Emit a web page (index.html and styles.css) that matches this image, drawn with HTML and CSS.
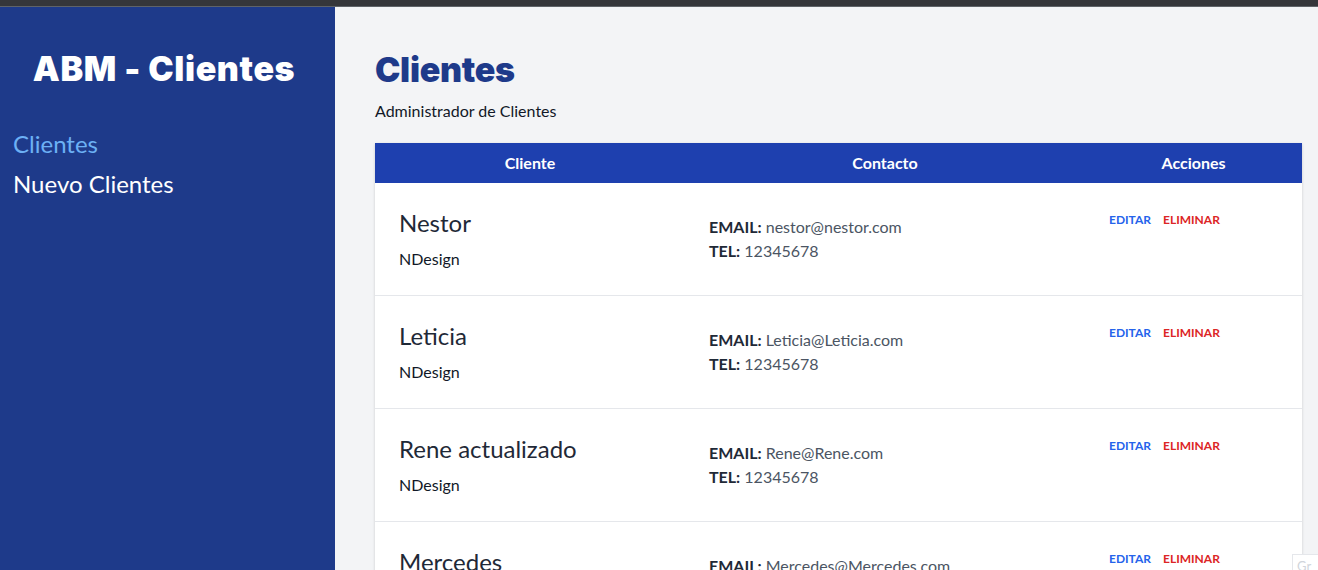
FILE: index.html
```html
<!DOCTYPE html>
<html lang="es">
<head>
<meta charset="utf-8">
<title>ABM - Clientes</title>
<link rel="stylesheet" href="styles.css">
</head>
<body>
<div class="topbar"></div>
<div class="layout">
  <aside class="sidebar">
    <h1 class="brand">ABM - Clientes</h1>
    <nav class="nav">
      <a class="nav-link active" href="#">Clientes</a>
      <a class="nav-link" href="#">Nuevo Clientes</a>
    </nav>
  </aside>
  <main class="main">
    <h2 class="page-title">Clientes</h2>
    <p class="page-sub">Administrador de Clientes</p>
    <table class="table">
      <colgroup>
        <col class="c1"><col class="c2"><col class="c3">
      </colgroup>
      <thead>
        <tr><th>Cliente</th><th>Contacto</th><th>Acciones</th></tr>
      </thead>
      <tbody>
        <tr>
          <td class="cell-client"><p class="name">Nestor</p><p class="company">NDesign</p></td>
          <td class="cell-contact"><p><span class="label">EMAIL:</span> nestor@nestor.com</p><p><span class="label">TEL:</span> 12345678</p></td>
          <td class="cell-actions"><a class="act edit" href="#">Editar</a><a class="act del" href="#">Eliminar</a></td>
        </tr>
        <tr>
          <td class="cell-client"><p class="name">Leticia</p><p class="company">NDesign</p></td>
          <td class="cell-contact"><p><span class="label">EMAIL:</span> Leticia@Leticia.com</p><p><span class="label">TEL:</span> 12345678</p></td>
          <td class="cell-actions"><a class="act edit" href="#">Editar</a><a class="act del" href="#">Eliminar</a></td>
        </tr>
        <tr>
          <td class="cell-client"><p class="name">Rene actualizado</p><p class="company">NDesign</p></td>
          <td class="cell-contact"><p><span class="label">EMAIL:</span> Rene@Rene.com</p><p><span class="label">TEL:</span> 12345678</p></td>
          <td class="cell-actions"><a class="act edit" href="#">Editar</a><a class="act del" href="#">Eliminar</a></td>
        </tr>
        <tr>
          <td class="cell-client"><p class="name">Mercedes</p><p class="company">NDesign</p></td>
          <td class="cell-contact"><p><span class="label">EMAIL:</span> Mercedes@Mercedes.com</p><p><span class="label">TEL:</span> 12345678</p></td>
          <td class="cell-actions"><a class="act edit" href="#">Editar</a><a class="act del" href="#">Eliminar</a></td>
        </tr>
      </tbody>
    </table>
  </main>
</div>
<div class="corner-widget">Gr</div>
</body>
</html>
```
FILE: styles.css
```css
* { box-sizing: border-box; }
html, body { margin: 0; padding: 0; }
body {
  font-family: "Lato", "Noto Sans", "DejaVu Sans", sans-serif;
  color: #111827;
  background: #f3f4f6;
  height: 570px;
  overflow: hidden;
}
.topbar {
  height: 7px;
  background: #35363a;
  border-bottom: 1px solid #5f6368;
}
.layout {
  display: flex;
  height: 563px;
}
.sidebar {
  width: 335px;
  flex-shrink: 0;
  background: #1e3a8a;
  padding: 42px 20px 0 13px;
}
.brand {
  margin: 0;
  text-align: center;
  color: #ffffff;
  font-family: "Inter", "Lato", sans-serif;
  font-size: 34px;
  line-height: 40px;
  font-weight: 900;
  letter-spacing: 0.6px;
}
.nav {
  margin-top: 39px;
  display: flex;
  flex-direction: column;
  gap: 8px;
}
.nav-link {
  display: block;
  color: #ffffff;
  text-decoration: none;
  font-size: 24px;
  line-height: 32px;
}
.nav-link.active { color: #6cb0f5; }
.main {
  flex: 1;
  padding: 43px 16px 0 40px;
  overflow: hidden;
}
.page-title {
  margin: 0;
  color: #1e3a8a;
  font-family: "Inter", "Lato", sans-serif;
  font-size: 34px;
  line-height: 40px;
  font-weight: 900;
  letter-spacing: -0.3px;
}
.page-sub {
  margin: 9px 0 0;
  font-size: 16px;
  line-height: 24px;
  color: #111827;
}
.table {
  margin-top: 20px;
  width: 100%;
  border-collapse: collapse;
  table-layout: fixed;
  background: #ffffff;
  box-shadow: 0 1px 3px rgba(0,0,0,0.12), 0 1px 2px rgba(0,0,0,0.06);
}
.c1 { width: 310px; }
.c2 { width: 400px; }
.c3 { width: 217px; }
.table thead tr { background: #1e40af; }
.table th {
  color: #ffffff;
  font-size: 16px;
  line-height: 24px;
  font-weight: 700;
  padding: 8px 0;
  text-align: center;
}
.table tbody tr { border-bottom: 1px solid #e5e7eb; }
.table td { padding: 24px 24px; vertical-align: middle; }
.table p { margin: 0; }
.name {
  font-size: 24px;
  line-height: 32px;
  color: #1f2937;
}
.company {
  margin-top: 8px !important;
  font-size: 16px;
  line-height: 24px;
  color: #111827;
}
.cell-contact {
  font-size: 16px;
  line-height: 24px;
  color: #4b5563;
}
.label { font-weight: 700; color: #1f2937; }
.table td.cell-actions {
  vertical-align: top;
  padding-top: 25px;
  white-space: nowrap;
}
.act {
  font-size: 12px;
  line-height: 16px;
  font-weight: 700;
  text-transform: uppercase;
  text-decoration: none;
}
.edit { color: #2563eb; margin-right: 12px; }
.del { color: #dc2626; }
.corner-widget {
  position: absolute;
  left: 1292px;
  top: 554px;
  width: 40px;
  height: 24px;
  border: 1px solid #e5e7eb;
  background: #ffffff;
  color: #d1d5db;
  font-size: 13px;
  padding: 3px 4px;
}
```
